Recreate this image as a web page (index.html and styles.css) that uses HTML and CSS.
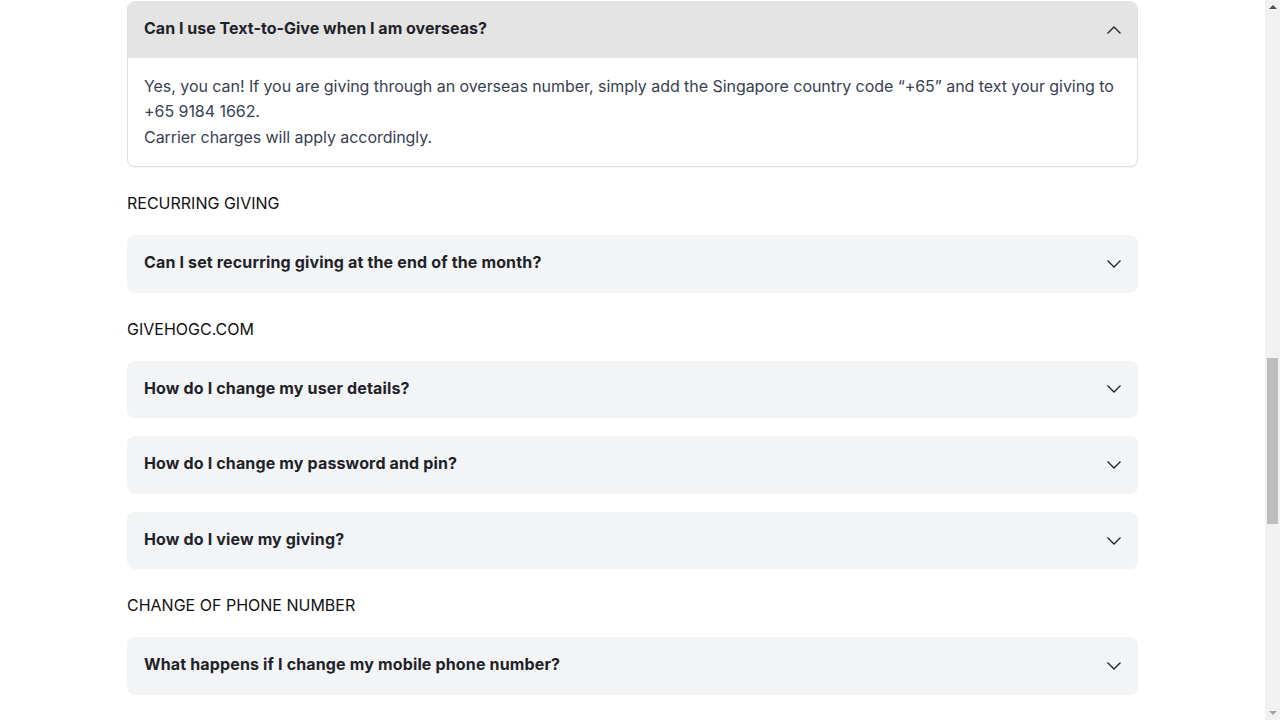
FILE: index.html
```html
<!DOCTYPE html>
<html lang="en">
<head>
<meta charset="utf-8">
<title>FAQ</title>
<link rel="stylesheet" href="styles.css">
</head>
<body>
<main class="faq">
  <div class="item open">
    <div class="question">
      <span>Can I use Text-to-Give when I am overseas?</span>
      <svg class="chev" width="14" height="8" viewBox="0 0 14 8"><path d="M0.5 7.5L7 1L13.5 7.5" fill="none" stroke="#1f2328" stroke-width="1.3"/></svg>
    </div>
    <div class="answer">
      <p>Yes, you can! If you are giving through an overseas number, simply add the Singapore country code “+65” and text your giving to +65 9184 1662.</p>
      <p>Carrier charges will apply accordingly.</p>
    </div>
  </div>

  <h2 class="section">RECURRING GIVING</h2>
  <div class="item">
    <div class="question">
      <span>Can I set recurring giving at the end of the month?</span>
      <svg class="chev" width="14" height="8" viewBox="0 0 14 8"><path d="M0.5 0.5L7 7L13.5 0.5" fill="none" stroke="#1f2328" stroke-width="1.3"/></svg>
    </div>
  </div>

  <h2 class="section">GIVEHOGC.COM</h2>
  <div class="item">
    <div class="question">
      <span>How do I change my user details?</span>
      <svg class="chev" width="14" height="8" viewBox="0 0 14 8"><path d="M0.5 0.5L7 7L13.5 0.5" fill="none" stroke="#1f2328" stroke-width="1.3"/></svg>
    </div>
  </div>
  <div class="item">
    <div class="question">
      <span>How do I change my password and pin?</span>
      <svg class="chev" width="14" height="8" viewBox="0 0 14 8"><path d="M0.5 0.5L7 7L13.5 0.5" fill="none" stroke="#1f2328" stroke-width="1.3"/></svg>
    </div>
  </div>
  <div class="item">
    <div class="question">
      <span>How do I view my giving?</span>
      <svg class="chev" width="14" height="8" viewBox="0 0 14 8"><path d="M0.5 0.5L7 7L13.5 0.5" fill="none" stroke="#1f2328" stroke-width="1.3"/></svg>
    </div>
  </div>

  <h2 class="section">CHANGE OF PHONE NUMBER</h2>
  <div class="item">
    <div class="question">
      <span>What happens if I change my mobile phone number?</span>
      <svg class="chev" width="14" height="8" viewBox="0 0 14 8"><path d="M0.5 0.5L7 7L13.5 0.5" fill="none" stroke="#1f2328" stroke-width="1.3"/></svg>
    </div>
  </div>
</main>

<div class="scrollbar" aria-hidden="true">
  <span class="arrow up"></span>
  <div class="track"><div class="thumb"></div></div>
  <span class="arrow down"></span>
</div>
</body>
</html>
```
FILE: styles.css
```css
body {
  margin: 0;
  padding: 1px 15px 0 0;
  background: #fff;
  font-family: Inter, "Noto Sans", sans-serif;
  color: #1f2328;
}
.faq {
  width: 1011px;
  margin: 0 auto;
  display: flex;
  flex-direction: column;
  gap: 18px;
  padding-bottom: 24px;
}
.item {
  border: 1px solid transparent;
  border-radius: 8px;
  background: #f3f4f6;
  overflow: hidden;
}
.item.open {
  border-color: #e0e0e0;
  background: #fff;
  box-shadow: 0 1px 1px rgba(0,0,0,0.05);
}
.question {
  display: flex;
  align-items: center;
  justify-content: space-between;
  height: 55.6px;
  box-sizing: border-box;
  padding: 0 16px;
  font-size: 16px;
  line-height: 25.6px;
  font-weight: 700;
  letter-spacing: 0.15px;
  color: #1f2328;
}
.question span {
  margin-top: -2px;
}
.open .question {
  background: #e4e4e4;
  letter-spacing: 0.02px;
}
.chev {
  flex: none;
  display: block;
}
.answer {
  padding: 16px 16px 15.6px;
  font-size: 16px;
  line-height: 25.6px;
  letter-spacing: -0.05px;
  color: #374151;
}
.answer p {
  margin: 0;
}
.section {
  margin: 6px 0 2px;
  font-size: 16px;
  line-height: 24px;
  font-weight: 400;
  color: #111;
}
.scrollbar {
  position: fixed;
  top: 0;
  right: 0;
  width: 15px;
  height: 100%;
  background: #f1f1f1;
  display: flex;
  flex-direction: column;
  align-items: center;
}
.arrow {
  flex: none;
  width: 0;
  height: 0;
  border-left: 4px solid transparent;
  border-right: 4px solid transparent;
  margin: 5px 0;
}
.arrow.up {
  border-bottom: 4px solid #505050;
}
.arrow.down {
  border-top: 4px solid #a3a3a3;
}
.track {
  flex: 1;
  width: 100%;
  position: relative;
}
.thumb {
  position: absolute;
  left: 2px;
  right: 2px;
  top: 344px;
  height: 166px;
  background: #bdbdbd;
}
```
